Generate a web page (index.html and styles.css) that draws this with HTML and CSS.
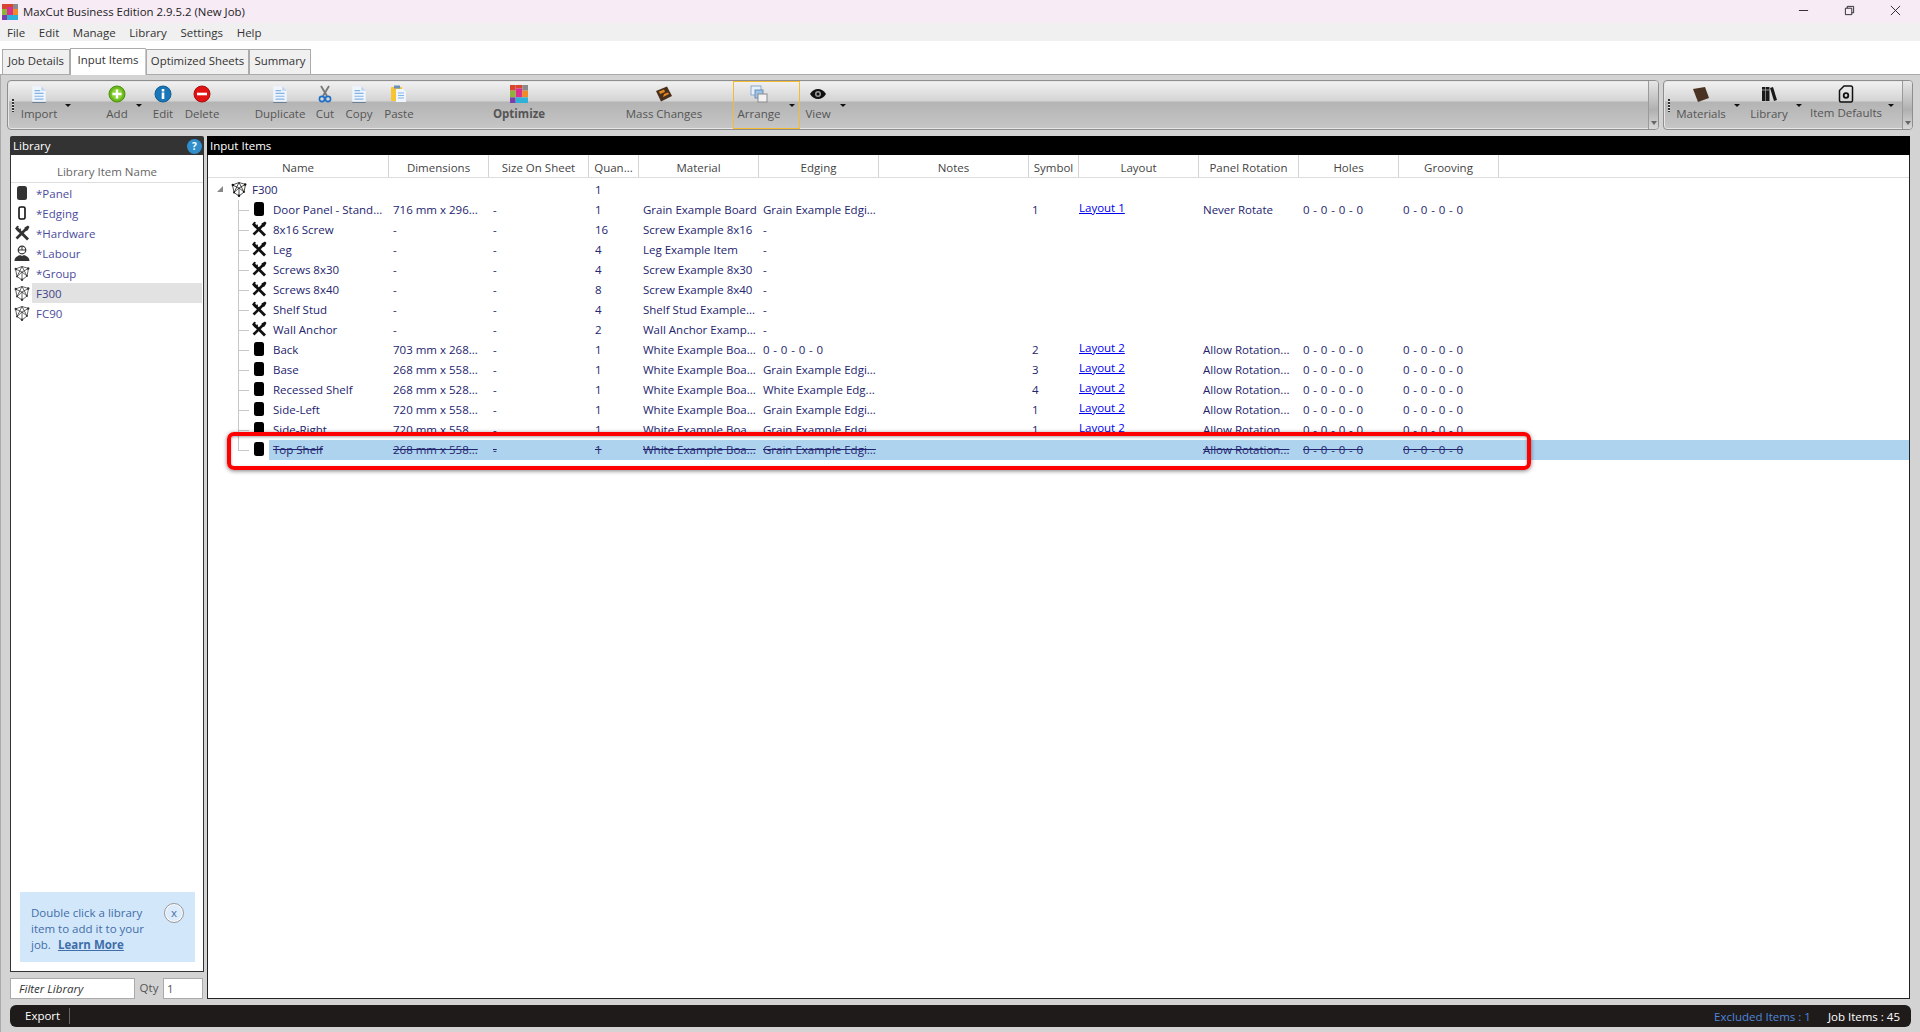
FILE: index.html
```html
<!DOCTYPE html>
<html lang="en">
<head>
<meta charset="utf-8">
<title>MaxCut Business Edition</title>
<link rel="stylesheet" href="styles.css">
</head>
<body>
<svg class="defs" width="0" height="0" aria-hidden="true">
  <defs>
    <symbol id="logo" viewBox="0 0 16 16">
      <rect x="0" y="0" width="5" height="5" fill="#d9442f"/><rect x="5" y="0" width="6" height="3" fill="#d9442f"/>
      <rect x="5" y="3" width="6" height="8" fill="#d92f8f"/><rect x="11" y="0" width="5" height="5" fill="#8a8a8a"/>
      <rect x="0" y="5" width="5" height="6" fill="#8fb33a"/><rect x="11" y="5" width="5" height="6" fill="#f08a24"/>
      <rect x="0" y="11" width="5" height="5" fill="#7a3fa8"/><rect x="5" y="11" width="11" height="5" fill="#2fb0d9"/>
    </symbol>
    <symbol id="doc" viewBox="0 0 14 16">
      <path d="M1 1h8l4 4v10H1z" fill="#eef5fd"/><path d="M9 1l4 4H9z" fill="#bcd4ef"/>
      <path d="M3 5h5M3 7.500h8M3 10h8M3 12.500h8" stroke="#86b3e6" stroke-width="1.100"/>
      <path d="M1 15.500h12" stroke="#6f7f92" stroke-width="1"/>
    </symbol>
    <symbol id="panel" viewBox="0 0 12 16"><rect x="1" y="1" width="10" height="14" rx="2.500" fill="currentColor"/></symbol>
    <symbol id="edging" viewBox="0 0 12 16"><rect x="3" y="2" width="6" height="12" rx="1.500" fill="none" stroke="currentColor" stroke-width="1.600"/></symbol>
    <symbol id="tools" viewBox="0 0 16 16">
      <path d="M3 3.500L14 14.500" stroke="currentColor" stroke-width="2.800" fill="none"/>
      <path d="M1 3.500L3.200 .8 5 1.600 3.800 3.200 5 4.300 6.500 3.200 7 5 4.500 7.200z" fill="currentColor"/>
      <path d="M2.500 13.500L12.500 3.500" stroke="currentColor" stroke-width="2.600" fill="none"/>
      <path d="M10.500 2.500L14 .5 15.500 2 13.500 5.500 11.500 6z" fill="currentColor"/>
    </symbol>
    <symbol id="labour" viewBox="0 0 16 16">
      <circle cx="8" cy="5" r="3.800" fill="none" stroke="currentColor" stroke-width="1.200"/>
      <path d="M4 5h8M8 1.500V5" stroke="currentColor" stroke-width="1"/>
      <path d="M.5 16c0-3.500 3-5 5.500-6l2 1 2-1c2.500 1 5.500 2.500 5.500 6z" fill="currentColor"/>
    </symbol>
    <symbol id="group" viewBox="0 0 16 16">
      <path d="M1.500 4L8 1.500 14.500 3.500 13 11 8 15 3 11.500zM1.500 4L8 7 14.500 3.500M8 7V15M3 11.500L8 7 13 11M8 1.500L3 11.500M8 1.500L13 11" fill="none" stroke="currentColor" stroke-width=".75"/>
      <circle cx="1.800" cy="4" r="1.200" fill="currentColor"/><circle cx="14.200" cy="3.500" r="1.200" fill="currentColor"/><circle cx="8" cy="14.700" r="1.200" fill="currentColor"/><circle cx="3" cy="11.500" r=".9" fill="currentColor"/><circle cx="13" cy="11" r=".9" fill="currentColor"/>
    </symbol>
  </defs>
</svg>

<header class="titlebar">
  <svg class="app-logo"><use href="#logo"/></svg>
  <span class="app-title">MaxCut Business Edition 2.9.5.2 (New Job)</span>
  <div class="win-controls">
    <svg class="win-btn" viewBox="0 0 12 12"><path d="M1 6h10" stroke="#222" fill="none"/></svg>
    <svg class="win-btn" viewBox="0 0 12 12"><path d="M1.500 3.500h7v7h-7zM3.500 3.500v-2h7v7h-2" stroke="#222" fill="none"/></svg>
    <svg class="win-btn" viewBox="0 0 12 12"><path d="M1 1l10 10M11 1L1 11" stroke="#222" fill="none"/></svg>
  </div>
</header>

<nav class="menubar">
  <span>File</span><span>Edit</span><span>Manage</span><span>Library</span><span>Settings</span><span>Help</span>
</nav>

<div class="tabs">
  <span class="tab tab-job">Job Details</span>
  <span class="tab tab-active">Input Items</span>
  <span class="tab tab-opt">Optimized Sheets</span>
  <span class="tab tab-sum">Summary</span>
</div>

<main class="content">
  <div class="toolbars">
    <div class="toolbar toolbar-main">
      <span class="gripper"></span>
      <div class="tool t-import has-arrow"><svg class="ico i-doc"><use href="#doc"/></svg><span>Import</span></div>
      <div class="tool t-add has-arrow">
        <svg class="ico" viewBox="0 0 18 18"><circle cx="9" cy="9" r="8" fill="#6cb81e" stroke="#4d8f10"/><circle cx="9" cy="9" r="5.500" fill="#8cd33a"/><path d="M9 4.500v9M4.500 9h9" stroke="#fff" stroke-width="2.400"/></svg>
        <span>Add</span></div>
      <div class="tool t-edit">
        <svg class="ico" viewBox="0 0 18 18"><circle cx="9" cy="9" r="8" fill="#1976b8" stroke="#135d92"/><rect x="7.700" y="7.500" width="2.600" height="6.500" fill="#fff"/><rect x="7.700" y="4" width="2.600" height="2.500" fill="#fff"/></svg>
        <span>Edit</span></div>
      <div class="tool t-delete">
        <svg class="ico" viewBox="0 0 18 18"><circle cx="9" cy="9" r="8" fill="#e01212" stroke="#a80f0f"/><rect x="4" y="7.700" width="10" height="2.600" fill="#fff"/></svg>
        <span>Delete</span></div>
      <div class="tool t-dup"><svg class="ico i-doc"><use href="#doc"/></svg><span>Duplicate</span></div>
      <div class="tool t-cut">
        <svg class="ico" viewBox="0 0 18 18"><path d="M5 1l6 10M13 1L7 11" stroke="#777" stroke-width="1.800" fill="none"/><circle cx="6" cy="14" r="2.600" fill="none" stroke="#1f6fc4" stroke-width="1.600"/><circle cx="12" cy="14" r="2.600" fill="none" stroke="#1f6fc4" stroke-width="1.600"/></svg>
        <span>Cut</span></div>
      <div class="tool t-copy"><svg class="ico i-doc"><use href="#doc"/></svg><span>Copy</span></div>
      <div class="tool t-paste">
        <svg class="ico" viewBox="0 0 18 18"><rect x="1" y="2" width="11" height="14" rx="1" fill="#f7c531"/><rect x="4" y="0.500" width="6" height="3" fill="#6b8fb8"/><path d="M6 4h7l3 3v10H6z" fill="#eef5fd"/><path d="M8 8h6M8 10.500h6M8 13h6" stroke="#86b3e6"/></svg>
        <span>Paste</span></div>
      <div class="tool t-optimize"><svg class="ico"><use href="#logo"/></svg><span>Optimize</span></div>
      <div class="tool t-mass">
        <svg class="ico" viewBox="0 0 18 18"><path d="M1 6L12 1.500 17 11 6 16.500z" fill="#4a2e1c"/><path d="M4 6.500L9 4.500 10 7 5 9zM8 12l6-3-1-1.500-4 1.500z" fill="#e08a24"/></svg>
        <span>Mass Changes</span></div>
      <div class="tool t-arrange has-arrow">
        <svg class="ico" viewBox="0 0 18 18"><rect x="1" y="1" width="10" height="9" fill="#e6f0fb" stroke="#8aa9cc"/><rect x="5" y="5" width="8" height="8" fill="#9cc2e8" stroke="#6f8fb4"/><rect x="8" y="9" width="9" height="8" fill="#f2f2f2" stroke="#8c8c8c"/></svg>
        <span>Arrange</span></div>
      <div class="tool t-view has-arrow">
        <svg class="ico" viewBox="0 0 18 18"><path d="M1 9c2-3.500 5-5 8-5s6 1.500 8 5c-2 3.500-5 5-8 5s-6-1.500-8-5z" fill="#111"/><circle cx="9" cy="9" r="3" fill="#999"/><circle cx="9" cy="9" r="1.500" fill="#111"/></svg>
        <span>View</span></div>
      <span class="overflow"></span>
    </div>
    <div class="toolbar toolbar-side">
      <span class="gripper"></span>
      <div class="tool t-materials has-arrow">
        <svg class="ico" viewBox="0 0 18 18"><path d="M1 4l12-2 4 11-11 4z" fill="#4a3323"/></svg>
        <span>Materials</span></div>
      <div class="tool t-library has-arrow">
        <svg class="ico" viewBox="0 0 18 18"><rect x="2" y="2" width="3.500" height="14" fill="#1a1a1a"/><rect x="6" y="2" width="3.500" height="14" fill="#1a1a1a"/><path d="M10 3l3-1 4 13-3 1z" fill="#1a1a1a"/><path d="M2 5h7.500" stroke="#ccc" stroke-width=".7"/></svg>
        <span>Library</span></div>
      <div class="tool t-defaults has-arrow">
        <svg class="ico" viewBox="0 0 18 18"><path d="M7 1h7a1.500 1.500 0 0 1 1.500 1.500v13A1.500 1.500 0 0 1 14 17H4a1.500 1.500 0 0 1-1.500-1.500V5.500z" fill="none" stroke="#111" stroke-width="1.500"/><circle cx="9" cy="10.500" r="2.300" fill="none" stroke="#111" stroke-width="1.800"/></svg>
        <span>Item Defaults</span></div>
      <span class="overflow"></span>
    </div>
  </div>

  <div class="workspace">
    <aside class="library">
      <div class="panel-head lib-head"><span>Library</span><span class="help">?</span></div>
      <div class="lib-body">
        <div class="lib-col">Library Item Name</div>
        <ul class="lib-list">
          <li><svg class="lib-ico lib-ico-soft"><use href="#panel"/></svg><span class="lib-name">*Panel</span></li>
          <li><svg class="lib-ico"><use href="#edging"/></svg><span class="lib-name">*Edging</span></li>
          <li><svg class="lib-ico lib-ico-soft"><use href="#tools"/></svg><span class="lib-name">*Hardware</span></li>
          <li><svg class="lib-ico lib-ico-soft"><use href="#labour"/></svg><span class="lib-name">*Labour</span></li>
          <li><svg class="lib-ico lib-ico-soft"><use href="#group"/></svg><span class="lib-name">*Group</span></li>
          <li><svg class="lib-ico lib-ico-soft"><use href="#group"/></svg><span class="lib-name lib-selected">F300</span></li>
          <li><svg class="lib-ico lib-ico-soft"><use href="#group"/></svg><span class="lib-name">FC90</span></li>
        </ul>
        <div class="tip">
          <span class="tip-line">Double click a library</span>
          <span class="tip-line">item to add it to your</span>
          <span class="tip-line tip-last"><span>job.</span><a>Learn More</a></span>
          <span class="tip-close">x</span>
        </div>
      </div>
      <div class="filter">
        <span class="field field-filter">Filter Library</span>
        <span class="qty-label">Qty</span>
        <span class="field field-qty">1</span>
      </div>
    </aside>

    <section class="items">
      <div class="panel-head items-head">Input Items</div>
      <div class="items-body">
        <div class="grid-row grid-header">
          <span>Name</span><span>Dimensions</span><span>Size On Sheet</span><span>Quan...</span><span>Material</span><span>Edging</span><span>Notes</span><span>Symbol</span><span>Layout</span><span>Panel Rotation</span><span>Holes</span><span>Grooving</span>
        </div>
        <div class="tree">
          <div class="grid-row row-root">
            <span class="c-name"><i class="expander"></i><svg class="row-ico"><use href="#group"/></svg>F300</span><span></span><span></span><span class="c-qty">1</span>
          </div>
          <div class="grid-row child"><span class="c-name"><svg class="row-ico row-ico-p"><use href="#panel"/></svg>Door Panel - Stand...</span><span>716 mm x 296...</span><span>-</span><span class="c-qty">1</span><span>Grain Example Board</span><span>Grain Example Edgi...</span><span></span><span class="c-sym">1</span><span><a class="lnk">Layout 1</a></span><span>Never Rotate</span><span class="z">0 - 0 - 0 - 0</span><span class="z">0 - 0 - 0 - 0</span></div>
          <div class="grid-row child"><span class="c-name"><svg class="row-ico"><use href="#tools"/></svg>8x16 Screw</span><span>-</span><span>-</span><span class="c-qty">16</span><span>Screw Example 8x16</span><span>-</span></div>
          <div class="grid-row child"><span class="c-name"><svg class="row-ico"><use href="#tools"/></svg>Leg</span><span>-</span><span>-</span><span class="c-qty">4</span><span>Leg Example Item</span><span>-</span></div>
          <div class="grid-row child"><span class="c-name"><svg class="row-ico"><use href="#tools"/></svg>Screws 8x30</span><span>-</span><span>-</span><span class="c-qty">4</span><span>Screw Example 8x30</span><span>-</span></div>
          <div class="grid-row child"><span class="c-name"><svg class="row-ico"><use href="#tools"/></svg>Screws 8x40</span><span>-</span><span>-</span><span class="c-qty">8</span><span>Screw Example 8x40</span><span>-</span></div>
          <div class="grid-row child"><span class="c-name"><svg class="row-ico"><use href="#tools"/></svg>Shelf Stud</span><span>-</span><span>-</span><span class="c-qty">4</span><span>Shelf Stud Example...</span><span>-</span></div>
          <div class="grid-row child"><span class="c-name"><svg class="row-ico"><use href="#tools"/></svg>Wall Anchor</span><span>-</span><span>-</span><span class="c-qty">2</span><span>Wall Anchor Examp...</span><span>-</span></div>
          <div class="grid-row child"><span class="c-name"><svg class="row-ico row-ico-p"><use href="#panel"/></svg>Back</span><span>703 mm x 268...</span><span>-</span><span class="c-qty">1</span><span>White Example Boa...</span><span class="z">0 - 0 - 0 - 0</span><span></span><span class="c-sym">2</span><span><a class="lnk">Layout 2</a></span><span>Allow Rotation...</span><span class="z">0 - 0 - 0 - 0</span><span class="z">0 - 0 - 0 - 0</span></div>
          <div class="grid-row child"><span class="c-name"><svg class="row-ico row-ico-p"><use href="#panel"/></svg>Base</span><span>268 mm x 558...</span><span>-</span><span class="c-qty">1</span><span>White Example Boa...</span><span>Grain Example Edgi...</span><span></span><span class="c-sym">3</span><span><a class="lnk">Layout 2</a></span><span>Allow Rotation...</span><span class="z">0 - 0 - 0 - 0</span><span class="z">0 - 0 - 0 - 0</span></div>
          <div class="grid-row child"><span class="c-name"><svg class="row-ico row-ico-p"><use href="#panel"/></svg>Recessed Shelf</span><span>268 mm x 528...</span><span>-</span><span class="c-qty">1</span><span>White Example Boa...</span><span>White Example Edg...</span><span></span><span class="c-sym">4</span><span><a class="lnk">Layout 2</a></span><span>Allow Rotation...</span><span class="z">0 - 0 - 0 - 0</span><span class="z">0 - 0 - 0 - 0</span></div>
          <div class="grid-row child"><span class="c-name"><svg class="row-ico row-ico-p"><use href="#panel"/></svg>Side-Left</span><span>720 mm x 558...</span><span>-</span><span class="c-qty">1</span><span>White Example Boa...</span><span>Grain Example Edgi...</span><span></span><span class="c-sym">1</span><span><a class="lnk">Layout 2</a></span><span>Allow Rotation...</span><span class="z">0 - 0 - 0 - 0</span><span class="z">0 - 0 - 0 - 0</span></div>
          <div class="grid-row child row-clipped"><span class="c-name"><svg class="row-ico row-ico-p"><use href="#panel"/></svg>Side-Right</span><span>720 mm x 558...</span><span>-</span><span class="c-qty">1</span><span>White Example Boa...</span><span>Grain Example Edgi...</span><span></span><span class="c-sym">1</span><span><a class="lnk">Layout 2</a></span><span>Allow Rotation...</span><span class="z">0 - 0 - 0 - 0</span><span class="z">0 - 0 - 0 - 0</span></div>
          <div class="grid-row child row-excluded"><span class="c-name"><svg class="row-ico row-ico-p"><use href="#panel"/></svg><s>Top Shelf</s></span><span><s>268 mm x 558...</s></span><span><s>-</s></span><span class="c-qty"><s>1</s></span><span><s>White Example Boa...</s></span><span><s>Grain Example Edgi...</s></span><span></span><span></span><span></span><span><s>Allow Rotation...</s></span><span class="z"><s>0 - 0 - 0 - 0</s></span><span class="z"><s>0 - 0 - 0 - 0</s></span></div>
          <div class="callout"></div>
        </div>
      </div>
    </section>
  </div>

  <footer class="statusbar">
    <span class="export">Export</span>
    <span class="status-right"><span class="excluded">Excluded Items : 1</span><span>Job Items : 45</span></span>
  </footer>
</main>
</body>
</html>
```

FILE: styles.css
```css
* { box-sizing: border-box; }
html, body { margin: 0; padding: 0; }
body {
  width: 1920px;
  height: 1032px;
  overflow: hidden;
  display: flex;
  flex-direction: column;
  font-family: "Open Sans", "Liberation Sans", sans-serif;
  font-size: 11.5px;
  color: #333;
  background: #fff;
}
.defs { position: absolute; }

/* title */
.titlebar {
  height: 23px;
  flex: none;
  display: flex;
  align-items: center;
  padding-left: 2px;
  background: #f7ebf6;
  color: #222;
}
.app-logo { width: 16px; height: 16px; margin-right: 5px; }
.app-title { font-size: 11.4px; }
.win-controls { margin-left: auto; display: flex; gap: 35px; padding-right: 19px; margin-top: -3px; }
.win-btn { width: 11px; height: 11px; }

/* menu */
.menubar {
  height: 18px;
  flex: none;
  display: flex;
  align-items: center;
  padding-left: 7px;
  gap: 13.6px;
  background: #f0f0f0;
  color: #333;
  font-size: 11.5px;
}

/* tabs */
.tabs {
  height: 33px;
  flex: none;
  display: flex;
  align-items: flex-end;
  padding-left: 2px;
  background: #fff;
}
.tab {
  height: 25px;
  display: flex;
  align-items: center;
  justify-content: center;
  padding-bottom: 3px;
  background: #f0f0f0;
  border: 1px solid #ababab;
  border-bottom: none;
  color: #333;
  font-size: 11.4px;
}
.tab-job { width: 68px; }
.tab-active { width: 76px; height: 27px; background: #fff; padding-bottom: 5px; border-right: 1px solid #c8c8c8; margin-bottom: -1px; position: relative; z-index: 1; }
.tab-opt { width: 103px; }
.tab-sum { width: 62px; }

/* content */
.content {
  flex: 1;
  min-height: 0;
  display: flex;
  flex-direction: column;
  background: #d3d3d3;
  border-top: 1px solid #ababab;
  border-left: 1px solid #ababab;
  padding: 5px 0 5px 6px;
}

.toolbars { display: flex; gap: 4px; height: 50px; flex: none; }
.toolbar {
  position: relative;
  display: flex;
  height: 50px;
  border: 1px solid #8e8e8e;
  border-radius: 4px;
  background: linear-gradient(#f2f2f2 0, #d4d4d4 20px, #b4b4b4 21px, #c6c6c6 48px);
  box-shadow: inset 0 0 0 1px #e6e6e6;
  padding-right: 11px;
}
.toolbar-main { width: 1652px; }
.toolbar-side { width: 250px; }
.gripper {
  position: absolute;
  left: 4px;
  top: 18px;
  width: 2px;
  height: 13px;
  background: repeating-linear-gradient(#333 0, #333 2px, #e8e8e8 2px, #e8e8e8 3px);
}
.overflow {
  position: absolute;
  right: 0;
  top: 0;
  bottom: 0;
  width: 10px;
  border-left: 1px solid #9a9a9a;
  border-radius: 0 3px 3px 0;
  background: linear-gradient(#e6e6e6, #b0b0b0 60%, #d8d8d8);
}
.overflow::after {
  content: "";
  position: absolute;
  left: 2px;
  bottom: 4px;
  border: 3px solid transparent;
  border-top: 4px solid #666;
  border-bottom: none;
}

.tool {
  position: relative;
  flex: none;
  display: flex;
  flex-direction: column;
  align-items: center;
  height: 48px;
  padding-top: 4px;
  white-space: nowrap;
  color: #555;
  font-size: 11.5px;
}
.tool span { margin-top: 3px; line-height: 16px; }
.ico { width: 18px; height: 18px; flex: none; }
.i-doc { width: 16px; }
.has-arrow::after {
  content: "";
  position: absolute;
  top: 23px;
  border: 3px solid transparent;
  border-top: 3px solid #111;
  border-bottom: none;
}

.t-import { width: 34px; margin-left: 14px; }
.t-import::after { right: -15px; }
.t-add { width: 30px; margin-left: 46px; }
.t-add::after { right: -10px; }
.t-edit { width: 30px; margin-left: 16px; }
.t-delete { width: 44px; margin-left: 2px; }
.t-dup { width: 60px; margin-left: 26px; }
.t-cut { width: 24px; margin-left: 3px; }
.t-copy { width: 32px; margin-left: 6px; }
.t-paste { width: 36px; margin-left: 6px; }
.t-optimize { width: 60px; margin-left: 72px; font-weight: 700; }
.t-mass { width: 88px; margin-left: 71px; }
.t-arrange { width: 67px; margin-left: 25px; padding-right: 15px; border: 1px solid #f4bc2e; padding-top: 3px; }
.t-arrange::after { right: 4px; top: 22px; }
.t-view { width: 30px; margin-left: 3px; }
.t-view::after { right: -13px; }

.t-materials { width: 56px; margin-left: 9px; }
.t-materials::after { right: -11px; }
.t-library { width: 40px; margin-left: 20px; }
.t-library::after { right: -13px; }
.t-defaults { width: 80px; margin-left: 17px; }
.t-defaults span { margin-top: 2px; }
.t-defaults::after { right: -8px; }

/* workspace */
.workspace {
  flex: 1;
  min-height: 0;
  display: flex;
  gap: 3px;
  margin: 6px 0 0 3px;
}
.panel-head {
  height: 19px;
  flex: none;
  display: flex;
  align-items: center;
  padding: 0 0 0 3px;
  color: #fff;
  font-size: 11.5px;
}

.library { width: 194px; display: flex; flex-direction: column; }
.lib-head { background: #333; justify-content: space-between; padding-right: 2px; border-radius: 2px 2px 0 0; }
.help {
  width: 15px;
  height: 15px;
  margin-top: 2px;
  border-radius: 50%;
  background: #2f8ecb;
  font-weight: 700;
  font-size: 10px;
  line-height: 15px;
  text-align: center;
}
.lib-body {
  flex: 1;
  min-height: 0;
  display: flex;
  flex-direction: column;
  background: #fff;
  border: 1px solid #333;
  border-top: none;
}
.lib-col {
  height: 28px;
  flex: none;
  padding-top: 6px;
  display: flex;
  align-items: center;
  justify-content: center;
  border-bottom: 1px solid #ddd;
  color: #666;
}
.lib-list { list-style: none; margin: 0; padding: 0; flex: 1; }
.lib-list li { height: 20px; display: flex; align-items: center; padding-left: 3px; }
.lib-ico { width: 16px; height: 16px; margin-right: 2px; flex: none; color: #111; }
.lib-ico-soft { color: #333; }
.lib-name { flex: 1; height: 20px; line-height: 21px; padding-left: 4px; color: #4c4c9c; margin-right: 1px; }
.lib-selected { background: #e2e2e2; color: #44448a; }

.tip {
  position: relative;
  flex: none;
  display: flex;
  flex-direction: column;
  width: 175px;
  height: 70px;
  margin: 0 0 9px 9px;
  padding: 13px 30px 0 11px;
  background: #d3e7fb;
  color: #3f6ea8;
  line-height: 16px;
}
.tip-line { white-space: nowrap; }
.tip-last { display: flex; gap: 7px; }
.tip-last a { font-weight: 700; text-decoration: underline; }
.tip-close {
  position: absolute;
  right: 11px;
  top: 11px;
  width: 20px;
  height: 20px;
  border: 1px solid #999;
  border-radius: 50%;
  background: #dcecfc;
  box-shadow: inset 0 0 0 1px #fff;
  text-align: center;
  line-height: 17px;
  color: #4a6f9c;
}

.filter { height: 27px; flex: none; display: flex; align-items: flex-end; color: #555; }
.field {
  height: 21px;
  display: flex;
  align-items: center;
  background: #fff;
  border: 1px solid #aaa;
  padding-left: 8px;
}
.field-filter { width: 125px; font-style: italic; color: #333; }
.qty-label { width: 28px; height: 21px; line-height: 20px; text-align: center; }
.field-qty { width: 40px; padding-left: 3px; }

.items { flex: none; width: 1703px; display: flex; flex-direction: column; }
.items-head { background: #000; }
.items-body {
  flex: 1;
  min-height: 0;
  background: #fff;
  border: 1px solid #222;
  border-top: none;
}
.grid-row {
  display: grid;
  grid-template-columns: 181px 100px 100px 50px 120px 120px 150px 50px 120px 100px 100px 100px 1fr;
  height: 20px;
  align-items: center;
  white-space: nowrap;
  color: #24246e;
  position: relative;
}
.grid-row > span { padding-left: 4px; }
.grid-header { height: 23px; border-bottom: 1px solid #ddd; color: #444; }
.grid-header > span {
  height: 22px;
  padding-left: 0;
  padding-top: 2px;
  display: flex;
  align-items: center;
  justify-content: center;
  border-right: 1px solid #d4d4d4;
}
.tree { position: relative; padding-top: 2px; }
.tree .grid-row > span { padding-bottom: 2px; }
.tree .grid-row > .c-name { display: flex; align-items: center; padding-left: 43px; }
.tree .grid-row > .c-qty { padding-left: 6px; }
.tree .grid-row > .c-sym { padding-left: 3px; }
.tree .grid-row > .z { word-spacing: .8px; }
.row-ico { width: 16px; height: 16px; margin-right: 6px; flex: none; color: #111; }
.row-ico-p { color: #000; }
.tree .row-root > .c-name { padding-left: 23px; }
.row-root .row-ico { margin-right: 5px; }
.expander {
  width: 0;
  height: 0;
  margin: 0 8px 0 -14px;
  border-left: 6px solid transparent;
  border-bottom: 6px solid #888;
}
.child::before {
  content: "";
  position: absolute;
  left: 30px;
  top: 0;
  height: 20px;
  border-left: 1px solid #c8c8c8;
}
.child::after {
  content: "";
  position: absolute;
  left: 30px;
  top: 10px;
  width: 11px;
  border-top: 1px solid #c8c8c8;
}
.lnk { color: #0000ee; text-decoration: underline; position: relative; top: -2px; margin-left: -4px; }
.row-clipped { clip-path: inset(0 0 8px 0); }
.row-excluded { background: linear-gradient(to right, transparent 61px, #aed3ee 61px); }
.row-excluded::before { top: -4px; height: 14px; }
.row-excluded s { text-decoration: line-through; }
.callout {
  position: absolute;
  left: 19px;
  top: 254px;
  width: 1304px;
  height: 38px;
  border: 4px solid #f00;
  border-radius: 7px;
  box-shadow: 0 1px 4px rgba(0,0,0,.5), inset 0 1px 3px rgba(0,0,0,.35);
}

.statusbar {
  flex: none;
  height: 22px;
  margin: 6px 9px 0 3px;
  display: flex;
  align-items: center;
  justify-content: space-between;
  padding: 0 11px 0 15px;
  background: #1f1b1b;
  border-radius: 6px;
  color: #fff;
}
.export { width: 45px; height: 16px; line-height: 15px; border-right: 1px solid #666; }
.status-right { display: flex; gap: 17px; }
.excluded { color: #4f86d9; }
```
